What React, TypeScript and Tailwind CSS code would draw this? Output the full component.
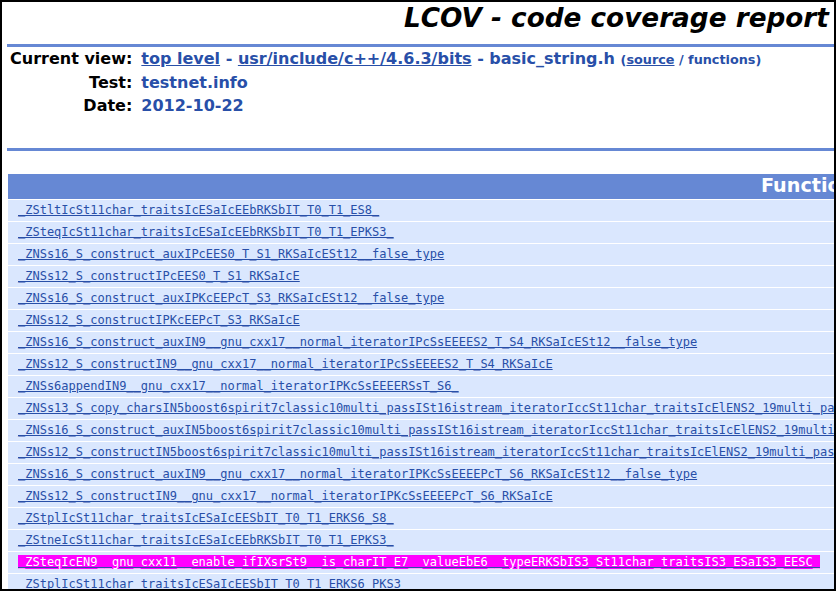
const rows = [
  "_ZStltIcSt11char_traitsIcESaIcEEbRKSbIT_T0_T1_ES8_",
  "_ZSteqIcSt11char_traitsIcESaIcEEbRKSbIT_T0_T1_EPKS3_",
  "_ZNSs16_S_construct_auxIPcEES0_T_S1_RKSaIcESt12__false_type",
  "_ZNSs12_S_constructIPcEES0_T_S1_RKSaIcE",
  "_ZNSs16_S_construct_auxIPKcEEPcT_S3_RKSaIcESt12__false_type",
  "_ZNSs12_S_constructIPKcEEPcT_S3_RKSaIcE",
  "_ZNSs16_S_construct_auxIN9__gnu_cxx17__normal_iteratorIPcSsEEEES2_T_S4_RKSaIcESt12__false_type",
  "_ZNSs12_S_constructIN9__gnu_cxx17__normal_iteratorIPcSsEEEES2_T_S4_RKSaIcE",
  "_ZNSs6appendIN9__gnu_cxx17__normal_iteratorIPKcSsEEEERSsT_S6_",
  "_ZNSs13_S_copy_charsIN5boost6spirit7classic10multi_passISt16istream_iteratorIccSt11char_traitsIcElENS2_19multi_pass_policies12input_iteratorENS6_8ref_counted",
  "_ZNSs16_S_construct_auxIN5boost6spirit7classic10multi_passISt16istream_iteratorIccSt11char_traitsIcElENS2_19multi_pass_policies12input_iteratorENS6_8ref_counted",
  "_ZNSs12_S_constructIN5boost6spirit7classic10multi_passISt16istream_iteratorIccSt11char_traitsIcElENS2_19multi_pass_policies12input_iteratorENS6_8ref_counted",
  "_ZNSs16_S_construct_auxIN9__gnu_cxx17__normal_iteratorIPKcSsEEEEPcT_S6_RKSaIcESt12__false_type",
  "_ZNSs12_S_constructIN9__gnu_cxx17__normal_iteratorIPKcSsEEEEPcT_S6_RKSaIcE",
  "_ZStplIcSt11char_traitsIcESaIcEESbIT_T0_T1_ERKS6_S8_",
  "_ZStneIcSt11char_traitsIcESaIcEEbRKSbIT_T0_T1_EPKS3_",
  "_ZSteqIcEN9__gnu_cxx11__enable_ifIXsrSt9__is_charIT_E7__valueEbE6__typeERKSbIS3_St11char_traitsIS3_ESaIS3_EESC_",
  "_ZStplIcSt11char_traitsIcESaIcEESbIT_T0_T1_ERKS6_PKS3_",
];

export default function App() {
  return (
    <div className="w-[838px] h-[593px] bg-white font-['DejaVu_Sans',sans-serif]">
      <div className="w-[836px] h-[591px] border-2 border-black overflow-hidden">
        <div className="w-[1700px] pl-[5px]">
          {/* title */}
          <div className="h-[42px] pl-[397px] text-[26.3px] leading-[32px] font-bold italic text-black whitespace-nowrap">
            LCOV - code coverage report
          </div>
          <div className="h-[3px] bg-[#6688d4]" />

          {/* header info */}
          <div className="grid grid-cols-[auto_1fr] gap-x-[9px] pl-[3px] text-[16px] font-bold leading-[23px] whitespace-nowrap">
            <div className="text-right text-black">Current view:</div>
            <div className="text-[#284fa8]">
              <a className="underline">top level</a> - <a className="underline">usr/include/c++/4.6.3/bits</a> - basic_string.h{" "}
              <span className="text-[12.8px]">
                (<a className="underline">source</a> / functions)
              </span>
            </div>
            <div className="text-right text-black">Test:</div>
            <div className="text-[#284fa8]">testnet.info</div>
            <div className="text-right text-black">Date:</div>
            <div className="text-[#284fa8]">2012-10-22</div>
          </div>
          <div className="h-[31px]" />
          <div className="h-[3px] bg-[#6688d4]" />

          {/* function table */}
          <div className="mt-[23px] w-[1669px] pl-[1px]">
            <div className="h-[25px] bg-[#6688d4] text-center text-white font-bold text-[19.2px] leading-[24px] mb-[1px]">
              Function Name
            </div>
            {rows.map((r, i) => (
              <div key={i} className="h-[21px] mb-[1px] bg-[#dae7fe] pl-[10px] font-['DejaVu_Sans_Mono',monospace] text-[12px] leading-[21px] whitespace-nowrap">
                {i === 16 ? (
                  <a className="underline decoration-[#284fa8] bg-[#ff00ff] text-white">{r}</a>
                ) : (
                  <a className="underline text-[#284fa8]">{r}</a>
                )}
              </div>
            ))}
          </div>
        </div>
      </div>
    </div>
  );
}
